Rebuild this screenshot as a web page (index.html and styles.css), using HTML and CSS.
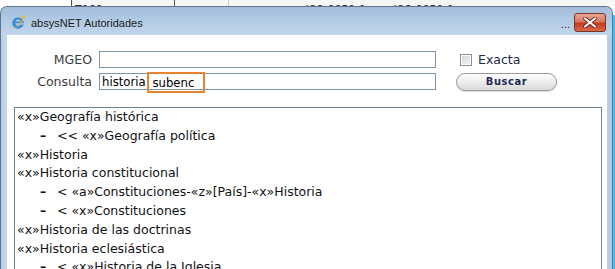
FILE: index.html
```html
<!DOCTYPE html>
<html lang="es">
<head>
    <meta charset="UTF-8">
    <title>absysNET Autoridades</title>
    <link rel="stylesheet" href="styles.css">
</head>
<body>

    <div class="under">
        <span class="cell first"></span>
        <span class="cell code">T066</span>
        <span class="cell empty"></span>
        <span class="cell iso"><span class="dot">•</span> ISO 8859-1</span>
        <span class="cell iso2"><span class="arrow">▸</span> ISO 8859-1</span>
    </div>

    <div class="desk">
        <div class="window">
            <div class="titlebar">
                <svg class="ie" width="16" height="16" viewBox="0 0 16 16">
                    <path d="M8 2.2a5.8 5.8 0 1 0 5.6 7.2h-3.1a2.9 2.9 0 0 1-5.2-1.1h8.5A5.8 5.8 0 0 0 8 2.2zM5.3 6.6a2.8 2.8 0 0 1 5.4 0z" fill="#3a8fd8" fill-rule="evenodd"/>
                    <path d="M1.5 12.5c1.5 1.8 7-1 10.5-5.5c2.5-3.2 3.3-5.8 2-6.300c-1-.4-3 .6-4.700 1.8c1.3-.5 2.600-.8 3.200-.5c1 .5-.2 3-2.200 5.4c-3.300 3.9-7.500 6.4-8.300 5.4c-.3-.4 0-1.300.7-2.400c-1.100 1.2-1.600 2.400-1.200 2.100z" fill="#f0b52b"/>
                </svg>
                <span class="title">absysNET Autoridades</span>
                <span class="dots">...</span>
                <span class="close">
                    <svg width="14" height="11" viewBox="0 0 14 11">
                        <path d="M2 1.5l10 8M12 1.5l-10 8" stroke="#5a1d12" stroke-width="3.6" stroke-linecap="round"/>
                        <path d="M2 1.5l10 8M12 1.5l-10 8" stroke="#fff" stroke-width="2.2" stroke-linecap="round"/>
                    </svg>
                </span>
            </div>

            <div class="content">
                <div class="form">
                    <label class="lbl">MGEO</label>
                    <div class="field"></div>
                    <label class="check"><span class="box"></span>Exacta</label>

                    <label class="lbl">Consulta</label>
                    <div class="field">historia <span class="mark">subenc</span></div>
                    <button class="buscar">Buscar</button>
                </div>

                <div class="results">
                    <div class="item">«x»Geografía histórica</div>
                    <div class="item sub"><span class="dash">–</span>&lt;&lt; «x»Geografía política</div>
                    <div class="item">«x»Historia</div>
                    <div class="item">«x»Historia constitucional</div>
                    <div class="item sub"><span class="dash">–</span>&lt; «a»Constituciones-«z»[País]-«x»Historia</div>
                    <div class="item sub"><span class="dash">–</span>&lt; «x»Constituciones</div>
                    <div class="item">«x»Historia de las doctrinas</div>
                    <div class="item">«x»Historia eclesiástica</div>
                    <div class="item sub"><span class="dash">–</span>&lt; «x»Historia de la Iglesia</div>
                </div>
            </div>
        </div>
        <div class="edge"></div>
    </div>

</body>
</html>
```

FILE: styles.css
```css
* {
    margin: 0;
    padding: 0;
    box-sizing: border-box;
}

body {
    width: 615px;
    height: 269px;
    overflow: hidden;
    background-color: #fff;
    font-family: 'DejaVu Sans Condensed', 'DejaVu Sans', sans-serif;
}

/* page behind the dialog, only its bottom edge shows */
.under {
    display: flex;
    height: 6px;
    overflow: hidden;
    background-color: #f6f6f6;
    font-size: 12px;
    color: #333;
}

.under .cell {
    height: 6px;
    overflow: hidden;
    padding-top: 3px;
    line-height: 14px;
    white-space: nowrap;
}

.under .first {
    width: 72px;
    background-color: #fff;
    border-right: 1px solid #555;
}

.under .code {
    width: 103px;
    padding-left: 3px;
    border-right: 1px solid #555;
}

.under .empty {
    width: 54px;
    border-right: 1px solid #ccc;
}

.under .iso {
    width: 156px;
    padding-left: 67px;
}

.desk {
    display: flex;
    height: 263px;
}

.window {
    width: 613px;
    display: flex;
    flex-direction: column;
    border: 1px solid #60768f;
    border-bottom: none;
    border-radius: 7px 7px 0 0;
    background: linear-gradient(90deg, #b4cbe6, #c3d7ee 4px, #c3d7ee 98%, #b2c9e3);
    padding: 0 5px 0 6px;
    overflow: hidden;
}

.edge {
    width: 2px;
    margin-top: 9px;
    background-color: #38c2f2;
}

.titlebar {
    flex-shrink: 0;
    height: 28px;
    display: flex;
    align-items: center;
    margin: 0 -5px 0 -6px;
    padding: 0 6px 0 9px;
    border-radius: 6px 6px 0 0;
    background: linear-gradient(#a3bddb, #b0c9e4 45%, #c2d6ec);
}

.ie {
    margin-top: 4px;
}

.title {
    margin-left: 5px;
    margin-top: 3px;
    font-family: 'Liberation Sans', sans-serif;
    font-size: 11px;
    color: #1b1b1b;
}

.dots {
    margin-left: auto;
    margin-top: 6px;
    font-family: 'Liberation Sans', sans-serif;
    font-size: 11px;
    color: #222;
}

.close {
    width: 32px;
    height: 19px;
    margin-left: 4px;
    margin-top: 3px;
    display: flex;
    align-items: center;
    justify-content: center;
    border: 1px solid #7b3326;
    border-radius: 3px;
    background: linear-gradient(#eaa595, #d9775f 45%, #c63c22 55%, #d8684a);
}

.content {
    flex: 1;
    background-color: #fff;
    padding: 16px 5px 0 7px;
}

.form {
    display: grid;
    grid-template-columns: 78px 337px auto;
    grid-auto-rows: 17px;
    column-gap: 7px;
    row-gap: 5px;
    align-items: center;
    font-size: 13px;
}

.lbl {
    justify-self: end;
    font-family: 'DejaVu Sans', sans-serif;
    font-size: 12.5px;
    color: #3c3c3c;
}

.field {
    height: 17px;
    border: 1px solid #7e93a6;
    padding-left: 2px;
    line-height: 15px;
    color: #000;
    white-space: nowrap;
}

.mark {
    display: inline-block;
    vertical-align: top;
    height: 21px;
    margin: -2px 0 0 -2px;
    padding: 1px 9px 0 3px;
    border: 2px solid #e8832f;
    line-height: 15px;
}

.check {
    display: flex;
    align-items: center;
    gap: 6px;
    margin-left: 17px;
    font-family: 'DejaVu Sans', sans-serif;
    font-size: 12.5px;
    color: #1f2a44;
}

.box {
    width: 12px;
    height: 12px;
    border: 1px solid #8f8f8f;
    background: linear-gradient(135deg, #d4d4d4, #f4f4f4);
    box-shadow: inset 0 0 0 1px #fff;
}

.buscar {
    width: 101px;
    height: 18px;
    margin-left: 13px;
    border: 1px solid #9a9a9a;
    border-radius: 9px;
    background: linear-gradient(#fdfdfd, #ededed 50%, #d8d8d8);
    box-shadow: 0 1px 1px rgba(0, 0, 0, 0.15);
    font-family: 'DejaVu Sans Condensed', 'DejaVu Sans', sans-serif;
    font-size: 11px;
    font-weight: bold;
    letter-spacing: 0.6px;
    color: #1e2c55;
}

.results {
    margin-top: 17px;
    height: 200px;
    border: 1px solid #6c8394;
    border-bottom: none;
    padding: 0 0 0 2px;
    font-family: 'DejaVu Sans', sans-serif;
    font-size: 12.5px;
    line-height: 18.8px;
    color: #111;
}

.item {
    white-space: nowrap;
}

.item.sub {
    padding-left: 23px;
}

.dash {
    display: inline-block;
    width: 17px;
    font-weight: bold;
}
```
